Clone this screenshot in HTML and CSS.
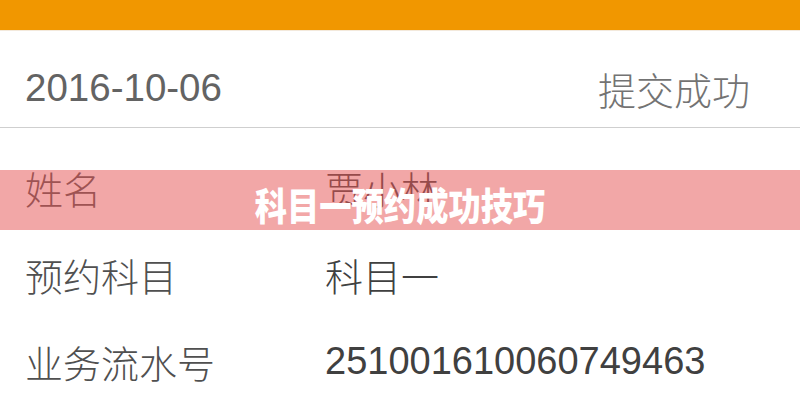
FILE: index.html
```html
<!DOCTYPE html>
<html lang="zh-CN">
<head>
<meta charset="utf-8">
<title>科目一预约成功技巧</title>
<link rel="stylesheet" href="styles.css">
</head>
<body>
<div class="page">
  <div class="topbar"></div>
  <div class="status-row">
    <span class="date">2016-10-06</span>
    <span class="status">提交成功</span>
  </div>
  <div class="details">
    <div class="row">
      <span class="label">姓名</span>
      <span class="value">贾小林</span>
    </div>
    <div class="row">
      <span class="label">预约科目</span>
      <span class="value">科目一</span>
    </div>
    <div class="row">
      <span class="label">业务流水号</span>
      <span class="value num">251001610060749463</span>
    </div>
  </div>
  <div class="banner"><span class="banner-text">科目一预约成功技巧</span></div>
</div>
</body>
</html>
```
FILE: styles.css
```css
html, body {
  margin: 0;
  padding: 0;
  background: #ffffff;
}
.page {
  position: relative;
  width: 800px;
  height: 400px;
  overflow: hidden;
  font-family: "Liberation Sans", "Noto Sans CJK SC", sans-serif;
  font-size: 38px;
  font-weight: 300;
  color: #4a4a4a;
}
.topbar {
  height: 30px;
  background: #f19700;
  border-bottom: 1px solid #f3e9dc;
}
.status-row {
  display: flex;
  justify-content: space-between;
  align-items: center;
  height: 97px;
  padding: 0 50px 0 25px;
  box-sizing: border-box;
  border-bottom: 1px solid #cfcfcf;
}
.status-row .date {
  color: #636363;
  font-size: 38.5px;
  padding-top: 18px;
}
.status-row .status {
  color: #737373;
  padding-top: 18px;
}
.details {
  padding-top: 16px;
}
.row {
  display: flex;
  align-items: center;
  height: 87px;
  padding-left: 25px;
}
.label {
  width: 300px;
  color: #505050;
}
.value {
  color: #404040;
}
.banner {
  position: absolute;
  left: 0;
  top: 170px;
  width: 800px;
  height: 60px;
  background: rgba(230, 86, 86, 0.52);
  display: flex;
  align-items: center;
  justify-content: center;
}
.banner-text {
  display: inline-block;
  color: #ffffff;
  font-family: "Noto Sans CJK SC", sans-serif;
  font-weight: 900;
  font-size: 38px;
  line-height: 1;
  transform: scaleX(0.85);
  margin-top: 8px;
}
```
